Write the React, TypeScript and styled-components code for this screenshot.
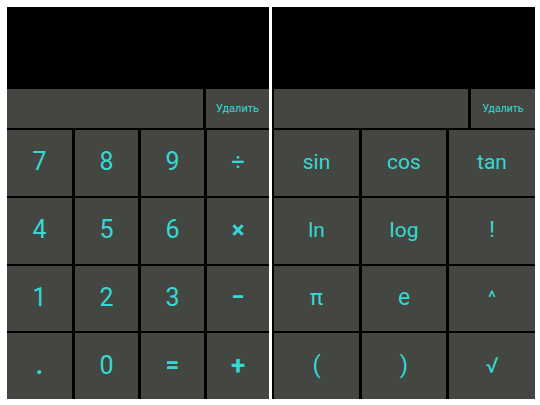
import React from "react";
import styled, { createGlobalStyle } from "styled-components";

const Global = createGlobalStyle`
  html, body { margin: 0; padding: 0; background: #ffffff; }
  body { font-family: Roboto, "Noto Sans", "Liberation Sans", sans-serif; }
`;

const Page = styled.div`
  display: flex;
  gap: 3px;
  padding: 7px 5px 6px 7px;
  width: 540px;
  height: 405px;
  box-sizing: border-box;
`;

const Panel = styled.div<{ $inset?: boolean }>`
  width: ${(p) => (p.$inset ? 263 : 262)}px;
  height: 392px;
  box-sizing: border-box;
  padding-left: ${(p) => (p.$inset ? 2 : 0)}px;
  background: #000;
  display: flex;
  flex-direction: column;
`;

const Display = styled.div`
  height: 82px;
  flex: none;
  background: #000;
`;

const InputRow = styled.div<{ $del: number }>`
  height: 39px;
  flex: none;
  display: grid;
  grid-template-columns: 1fr ${(p) => p.$del}px;
  gap: 3px;
`;

const Field = styled.div`
  background: #444641;
`;

const DeleteBtn = styled.div<{ $size: number }>`
  background: #444641;
  color: #34d9d3;
  font-size: ${(p) => p.$size}px;
  display: flex;
  align-items: center;
  justify-content: center;
`;

const Keypad = styled.div<{ $cols: string }>`
  flex: 1;
  display: grid;
  grid-template-columns: ${(p) => p.$cols};
  grid-template-rows: repeat(4, 1fr);
  column-gap: 3px;
  row-gap: 2px;
  padding-top: 2px;
`;

const Key = styled.div<{ $size: number; $bold?: boolean }>`
  background: #444641;
  color: #34d9d3;
  font-size: ${(p) => p.$size}px;
  font-weight: ${(p) => (p.$bold ? 700 : 400)};
  display: flex;
  align-items: center;
  justify-content: center;
  padding-bottom: 2px;
  box-sizing: border-box;
`;

const basicKeys: [string, number, boolean?][] = [
  ["7", 25],
  ["8", 25],
  ["9", 25],
  ["÷", 24],
  ["4", 25],
  ["5", 25],
  ["6", 25],
  ["×", 24, true],
  ["1", 25],
  ["2", 25],
  ["3", 25],
  ["−", 24, true],
  [".", 25, true],
  ["0", 25],
  ["=", 24, true],
  ["+", 26, true],
];

const sciKeys: [string, number][] = [
  ["sin", 21],
  ["cos", 21],
  ["tan", 21],
  ["ln", 21],
  ["log", 21],
  ["!", 22],
  ["π", 22],
  ["e", 23],
  ["^", 19],
  ["(", 24],
  [")", 24],
  ["√", 22],
];

export default function App() {
  return (
    <>
      <Global />
      <Page>
        <Panel>
          <Display />
          <InputRow $del={63}>
            <Field />
            <DeleteBtn $size={11}>Удалить</DeleteBtn>
          </InputRow>
          <Keypad $cols="65px 63px 63px 1fr">
            {basicKeys.map(([k, s, b], i) => (
              <Key key={i} $size={s} $bold={b}>
                {k}
              </Key>
            ))}
          </Keypad>
        </Panel>
        <Panel $inset>
          <Display />
          <InputRow $del={64}>
            <Field />
            <DeleteBtn $size={10.5}>Удалить</DeleteBtn>
          </InputRow>
          <Keypad $cols="85px 84px 1fr">
            {sciKeys.map(([k, s], i) => (
              <Key key={i} $size={s}>
                {k}
              </Key>
            ))}
          </Keypad>
        </Panel>
      </Page>
    </>
  );
}
